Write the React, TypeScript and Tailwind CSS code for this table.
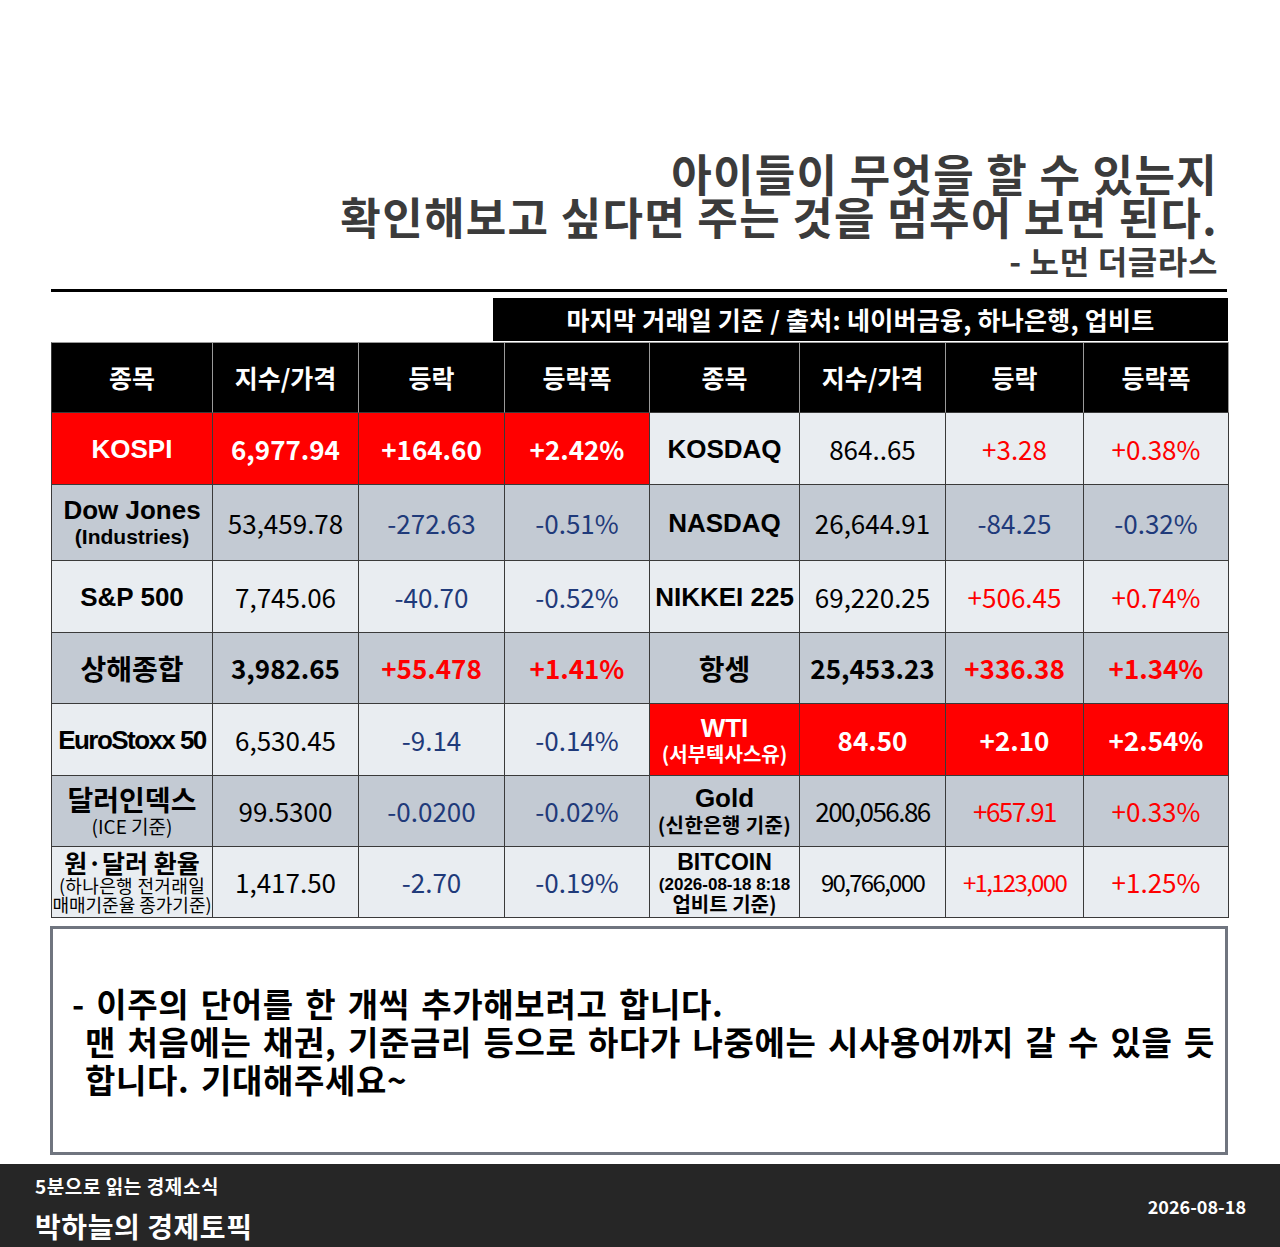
import React from "react";

const KR = "font-['Noto_Sans_CJK_KR',sans-serif]";
const EN = "font-['Liberation_Sans','Noto_Sans_CJK_KR',sans-serif]";

const NAVY = "text-[#1f3a7a]";
const RED = "text-[#ff0000]";

type Tone = "red" | "light" | "dark";

const bgOf: Record<Tone, string> = {
  red: "bg-[#ff0000]",
  light: "bg-[#e9edf1]",
  dark: "bg-[#c3cad3]",
};

const Cell: React.FC<{
  tone: Tone;
  first?: boolean;
  children: React.ReactNode;
}> = ({ tone, first, children }) => (
  <div
    className={`flex flex-col items-center justify-center text-center overflow-hidden border-r border-b border-[#3a3a3a] ${
      first ? "border-l" : ""
    } ${bgOf[tone]}`}
  >
    {children}
  </div>
);

// numeric value inside a cell
const Num: React.FC<{
  v: string;
  color?: string;
  bold?: boolean;
  tight?: boolean;
}> = ({ v, color = "text-black", bold, tight }) => (
  <span
    className={`${KR} text-[26px] leading-none whitespace-nowrap ${color} ${
      bold ? "font-bold" : "font-normal"
    } ${tight ? "tracking-[-0.06em]" : ""}`}
  >
    {v}
  </span>
);

const EnName: React.FC<{ t: string; color?: string; tight?: boolean }> = ({
  t,
  color = "text-black",
  tight,
}) => (
  <span
    className={`${EN} text-[26px] font-bold leading-[28px] whitespace-nowrap ${color} ${
      tight ? "tracking-[-0.06em]" : ""
    }`}
  >
    {t}
  </span>
);

const KrName: React.FC<{ t: string; size?: string }> = ({ t, size = "text-[28px] leading-[30px]" }) => (
  <span className={`${KR} ${size} font-bold whitespace-nowrap text-black`}>{t}</span>
);

const headers = ["종목", "지수/가격", "등락", "등락폭", "종목", "지수/가격", "등락", "등락폭"];

export default function App() {
  return (
    <div className="w-[1280px] h-[1247px] bg-white flex flex-col overflow-hidden">
      {/* Quote */}
      <div className={`${KR} pt-[152px] pr-[62px] text-right text-[#3b3b3b] font-bold`}>
        <div className="text-[44px] leading-[43px] tracking-[0.03em]">아이들이 무엇을 할 수 있는지</div>
        <div className="text-[44px] leading-[43px] tracking-[0.03em]">확인해보고 싶다면 주는 것을 멈추어 보면 된다.</div>
        <div className="mt-[4px] text-[32px] leading-[36px] tracking-[0.02em]">- 노먼 더글라스</div>
      </div>

      {/* Rule */}
      <div className="mt-[11px] ml-[51px] w-[1176px] h-[3px] bg-black" />

      {/* Source label */}
      <div
        className={`${KR} mt-[6px] ml-[493px] w-[735px] h-[43px] bg-black text-white font-bold text-[25px] flex items-center justify-center tracking-[0.01em]`}
      >
        마지막 거래일 기준 / 출처: 네이버금융, 하나은행, 업비트
      </div>

      {/* Market table */}
      <div className="mt-[1px] ml-[51px] grid grid-cols-[162px_146px_146px_145px_150px_146px_138px_145px] grid-rows-[71px_72px_76px_72px_71px_72px_71px_71px]">
        {headers.map((h, i) => (
          <div
            key={i}
            className={`${KR} bg-black text-white font-bold text-[25px] flex items-center justify-center border-t border-t-[#9a9a9a] border-b border-b-[#3a3a3a] border-r border-r-[#9a9a9a] ${
              i === 0 ? "border-l border-l-[#3a3a3a]" : ""
            }`}
          >
            {h}
          </div>
        ))}

        {/* Row 1 */}
        <Cell tone="red" first>
          <EnName t="KOSPI" color="text-white" />
        </Cell>
        <Cell tone="red"><Num v="6,977.94" color="text-white" bold /></Cell>
        <Cell tone="red"><Num v="+164.60" color="text-white" bold /></Cell>
        <Cell tone="red"><Num v="+2.42%" color="text-white" bold /></Cell>
        <Cell tone="light"><EnName t="KOSDAQ" /></Cell>
        <Cell tone="light"><Num v="864..65" /></Cell>
        <Cell tone="light"><Num v="+3.28" color={RED} /></Cell>
        <Cell tone="light"><Num v="+0.38%" color={RED} /></Cell>

        {/* Row 2 */}
        <Cell tone="dark" first>
          <EnName t="Dow Jones" />
          <span className={`${EN} text-[21px] font-bold leading-[25px] text-black`}>(Industries)</span>
        </Cell>
        <Cell tone="dark"><Num v="53,459.78" /></Cell>
        <Cell tone="dark"><Num v="-272.63" color={NAVY} /></Cell>
        <Cell tone="dark"><Num v="-0.51%" color={NAVY} /></Cell>
        <Cell tone="dark"><EnName t="NASDAQ" /></Cell>
        <Cell tone="dark"><Num v="26,644.91" /></Cell>
        <Cell tone="dark"><Num v="-84.25" color={NAVY} /></Cell>
        <Cell tone="dark"><Num v="-0.32%" color={NAVY} /></Cell>

        {/* Row 3 */}
        <Cell tone="light" first><EnName t="S&P 500" /></Cell>
        <Cell tone="light"><Num v="7,745.06" /></Cell>
        <Cell tone="light"><Num v="-40.70" color={NAVY} /></Cell>
        <Cell tone="light"><Num v="-0.52%" color={NAVY} /></Cell>
        <Cell tone="light"><EnName t="NIKKEI 225" /></Cell>
        <Cell tone="light"><Num v="69,220.25" /></Cell>
        <Cell tone="light"><Num v="+506.45" color={RED} /></Cell>
        <Cell tone="light"><Num v="+0.74%" color={RED} /></Cell>

        {/* Row 4 */}
        <Cell tone="dark" first><KrName t="상해종합" /></Cell>
        <Cell tone="dark"><Num v="3,982.65" bold /></Cell>
        <Cell tone="dark"><Num v="+55.478" color={RED} bold /></Cell>
        <Cell tone="dark"><Num v="+1.41%" color={RED} bold /></Cell>
        <Cell tone="dark"><KrName t="항셍" /></Cell>
        <Cell tone="dark"><Num v="25,453.23" bold /></Cell>
        <Cell tone="dark"><Num v="+336.38" color={RED} bold /></Cell>
        <Cell tone="dark"><Num v="+1.34%" color={RED} bold /></Cell>

        {/* Row 5 */}
        <Cell tone="light" first><EnName t="EuroStoxx 50" tight /></Cell>
        <Cell tone="light"><Num v="6,530.45" /></Cell>
        <Cell tone="light"><Num v="-9.14" color={NAVY} /></Cell>
        <Cell tone="light"><Num v="-0.14%" color={NAVY} /></Cell>
        <Cell tone="red">
          <EnName t="WTI" color="text-white" />
          <span className={`${KR} text-[20px] font-bold leading-[24px] text-white`}>(서부텍사스유)</span>
        </Cell>
        <Cell tone="red"><Num v="84.50" color="text-white" bold /></Cell>
        <Cell tone="red"><Num v="+2.10" color="text-white" bold /></Cell>
        <Cell tone="red"><Num v="+2.54%" color="text-white" bold /></Cell>

        {/* Row 6 */}
        <Cell tone="dark" first>
          <KrName t="달러인덱스" />
          <span className={`${KR} text-[19px] leading-[24px] text-black`}>(ICE 기준)</span>
        </Cell>
        <Cell tone="dark"><Num v="99.5300" /></Cell>
        <Cell tone="dark"><Num v="-0.0200" color={NAVY} /></Cell>
        <Cell tone="dark"><Num v="-0.02%" color={NAVY} /></Cell>
        <Cell tone="dark">
          <EnName t="Gold" />
          <span className={`${KR} text-[20px] font-bold leading-[26px] text-black tracking-[0.02em]`}>(신한은행 기준)</span>
        </Cell>
        <Cell tone="dark"><Num v="200,056.86" tight /></Cell>
        <Cell tone="dark"><Num v="+657.91" color={RED} tight /></Cell>
        <Cell tone="dark"><Num v="+0.33%" color={RED} /></Cell>

        {/* Row 7 */}
        <Cell tone="light" first>
          <KrName t="원·달러 환율" size="text-[25px] leading-[25px]" />
          <span className={`${KR} text-[18px] leading-[20px] text-black whitespace-nowrap tracking-[0.02em]`}>(하나은행 전거래일</span>
          <span className={`${KR} text-[18px] leading-[19px] text-black whitespace-nowrap`}>매매기준율 종가기준)</span>
        </Cell>
        <Cell tone="light"><Num v="1,417.50" /></Cell>
        <Cell tone="light"><Num v="-2.70" color={NAVY} /></Cell>
        <Cell tone="light"><Num v="-0.19%" color={NAVY} /></Cell>
        <Cell tone="light">
          <span className={`${EN} text-[23px] font-bold leading-[25px] text-black`}>BITCOIN</span>
          <span className={`${EN} text-[17px] font-bold leading-[19px] text-black whitespace-nowrap`}>(2026-08-18 8:18</span>
          <span className={`${KR} text-[20px] font-bold leading-[20px] text-black`}>업비트 기준)</span>
        </Cell>
        <Cell tone="light">
          <span className={`${KR} text-[24px] leading-none tracking-[-0.07em] text-black`}>90,766,000</span>
        </Cell>
        <Cell tone="light">
          <span className={`${KR} text-[24px] leading-none tracking-[-0.07em] ${RED}`}>+1,123,000</span>
        </Cell>
        <Cell tone="light"><Num v="+1.25%" color={RED} /></Cell>
      </div>

      {/* Note box */}
      <div className="mt-[8px] ml-[50px] w-[1178px] h-[229px] border-[3px] border-[#70757f] flex flex-col justify-center pl-[19px]">
        <div className={`${KR} text-[33px] font-bold leading-[38px] tracking-[0.02em] [word-spacing:0.1em] text-black`}>
          <div>- 이주의 단어를 한 개씩 추가해보려고 합니다.</div>
          <div className="pl-[13px]">맨 처음에는 채권, 기준금리 등으로 하다가 나중에는 시사용어까지 갈 수 있을 듯</div>
          <div className="pl-[13px]">합니다. 기대해주세요~</div>
        </div>
      </div>

      {/* Footer */}
      <div className={`${KR} mt-[9px] h-[83px] bg-[#262626] text-white flex justify-between px-[35px]`}>
        <div className="pt-[12px]">
          <div className="text-[19px] font-bold leading-[20px] tracking-[0.03em]">5분으로 읽는 경제소식</div>
          <div className="mt-[14px] text-[28px] font-bold leading-[32px] tracking-[0.02em]">박하늘의 경제토픽</div>
        </div>
        <div className="self-center text-[18px] font-bold leading-[20px] mr-[-1px]">2026-08-18</div>
      </div>
    </div>
  );
}
